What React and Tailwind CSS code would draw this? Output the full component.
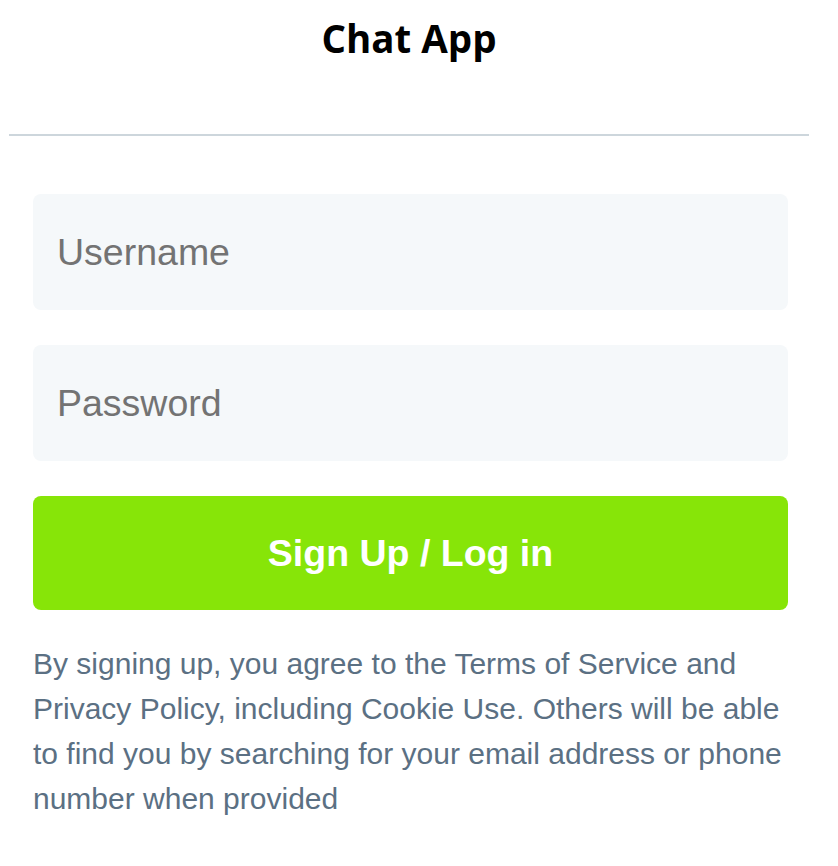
import { useState } from 'react';

export default function App() {
  const [form, setForm] = useState({ username: '', password: '' });

  const handleChange = (e) => {
    const { name, value } = e.target;
    setForm(prev => ({ ...prev, [name]: value }));
  };

  return (
    <div className="w-[838px] min-h-[866px] bg-white font-['Liberation_Sans',Arial,sans-serif]">
      <header className="ml-[9px] w-[800px] pt-[14px] pb-[72px] border-b-2 border-[#cdd6dc]">
        <h1 className="text-center text-[38.5px] leading-[48px] font-bold text-black font-['Open_Sans',sans-serif]">
          Chat App
        </h1>
      </header>

      <form className="mx-[33px] w-[755px] pt-[58px] flex flex-col" onSubmit={(e) => e.preventDefault()}>
        <input
          type="text"
          name="username"
          value={form.username}
          onChange={handleChange}
          placeholder="Username"
          className="h-[116px] w-full rounded-lg bg-[#f5f8fa] px-6 text-[37.5px] text-black placeholder-[#737373] outline-none"
        />
        <input
          type="password"
          name="password"
          value={form.password}
          onChange={handleChange}
          placeholder="Password"
          className="mt-[35px] h-[116px] w-full rounded-lg bg-[#f5f8fa] px-6 text-[37.5px] text-black placeholder-[#737373] outline-none"
        />
        <button
          type="submit"
          className="mt-[35px] h-[114px] w-full rounded-lg bg-[#87e508] text-[37.5px] font-bold text-white"
        >
          Sign Up / Log in
        </button>
        <p className="mt-[31px] text-[30px] leading-[45px] text-[#5b7083]">
          By signing up, you agree to the Terms of Service and Privacy Policy, including Cookie Use. Others will be able to find you by searching for your email address or phone number when provided
        </p>
      </form>
    </div>
  );
}
